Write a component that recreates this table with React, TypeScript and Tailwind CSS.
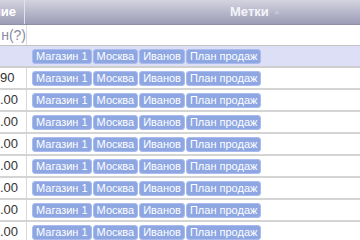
import React from "react";

const tags = ["Магазин 1", "Москва", "Иванов", "План продаж"];

function Tags() {
  return (
    <div className="flex gap-[1px] pl-[5px]">
      {tags.map((t) => (
        <span
          key={t}
          className="h-[15px] px-[3px] rounded-[3px] bg-[#8ea7e3] border border-[#a9bced] text-white text-[11px] leading-[13px] whitespace-nowrap"
        >
          {t}
        </span>
      ))}
    </div>
  );
}

const rows = ["90", ".00", ".00", ".00", ".00", ".00", ".00", ".00"];

export default function App() {
  return (
    <div className="w-[360px] h-[240px] overflow-hidden bg-white font-['Liberation_Sans',Arial,sans-serif]">
      <div className="flex h-[25px] bg-gradient-to-b from-[#d4d4e0] to-[#9c9cb6] border-b border-[#8f8fa6]">
        <div className="w-[25px] shrink-0 border-r border-[#e2e2ec] overflow-hidden flex items-center justify-end pr-[8px]">
          <span className="text-white text-[13px] font-bold whitespace-nowrap">ние</span>
        </div>
        <div className="w-[205px] shrink-0" />
        <div className="flex items-center">
          <span className="text-[#f4f4fa] text-[13px] font-bold">Метки</span>
          <span className="ml-[4px] text-[#c6c6d4] text-[8px]">▲</span>
        </div>
      </div>
      <div className="flex h-[21px] border-b border-[#c4c4c4]">
        <div className="w-[27px] shrink-0 border-r border-[#dcdcdc] overflow-hidden flex items-center justify-end">
          <span className="text-[#8a8aa4] text-[14px] whitespace-nowrap">н(?)</span>
        </div>
        <div className="flex-1" />
      </div>
      <div className="flex h-[22px] bg-[#dcdff5] border-b-2 border-[#cfcfcf]">
        <div className="w-[27px] shrink-0" />
        <div className="flex-1 flex items-center">
          <Tags />
        </div>
      </div>
      {rows.map((r, i) => (
        <div key={i} className="flex h-[22px] border-b-2 border-[#d4d4d4]">
          <div className="w-[27px] shrink-0 border-r border-[#d8d8d8] overflow-hidden flex items-center">
            <span className="text-[#333] text-[13px] whitespace-nowrap">{r}</span>
          </div>
          <div className="flex-1 flex items-center">
            <Tags />
          </div>
        </div>
      ))}
    </div>
  );
}
